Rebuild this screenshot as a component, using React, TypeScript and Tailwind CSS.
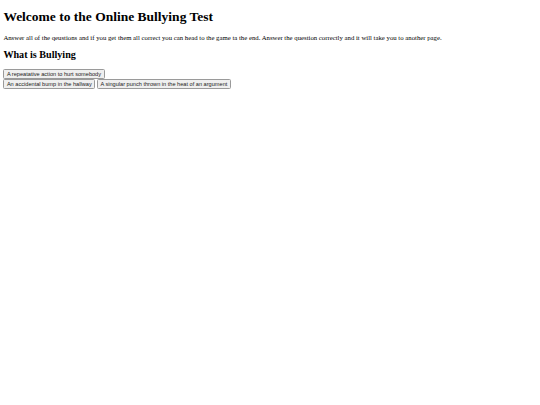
export default function App() {
  const btn =
    "font-['Liberation_Sans',Arial,sans-serif] text-[5.625px] leading-[normal] px-[2.5px] py-[1px] bg-[#efefef] border-[0.5px] border-[#9a9a9a] rounded-[1.5px] text-[#222]";
  return (
    <div className="m-[3.375px] font-['Liberation_Serif','Times_New_Roman',serif] text-black bg-white">
      <h1 className="text-[13.5px] font-bold my-[9px] leading-[normal]">
        Welcome to the Online Bullying Test
      </h1>
      <p className="text-[6.75px] my-[6.75px] leading-[normal]">
        Answer all of the qeustions and if you get them all correct you can head to the game ta the end. Answer the question correctly and it will take you to another page.
      </p>
      <h2 className="text-[10.125px] font-bold my-[8.4px] leading-[normal]">What is Bullying</h2>
      <div className="text-[6.75px] leading-[normal] pt-[0.5px]">
        <button className={btn}>A repeatative action to hurt somebody</button>
        <br />
        <button className={btn}>An accidental bump in the hallway</button>{" "}
        <button className={btn}>A singular punch thrown in the heat of an argument</button>
      </div>
    </div>
  );
}
